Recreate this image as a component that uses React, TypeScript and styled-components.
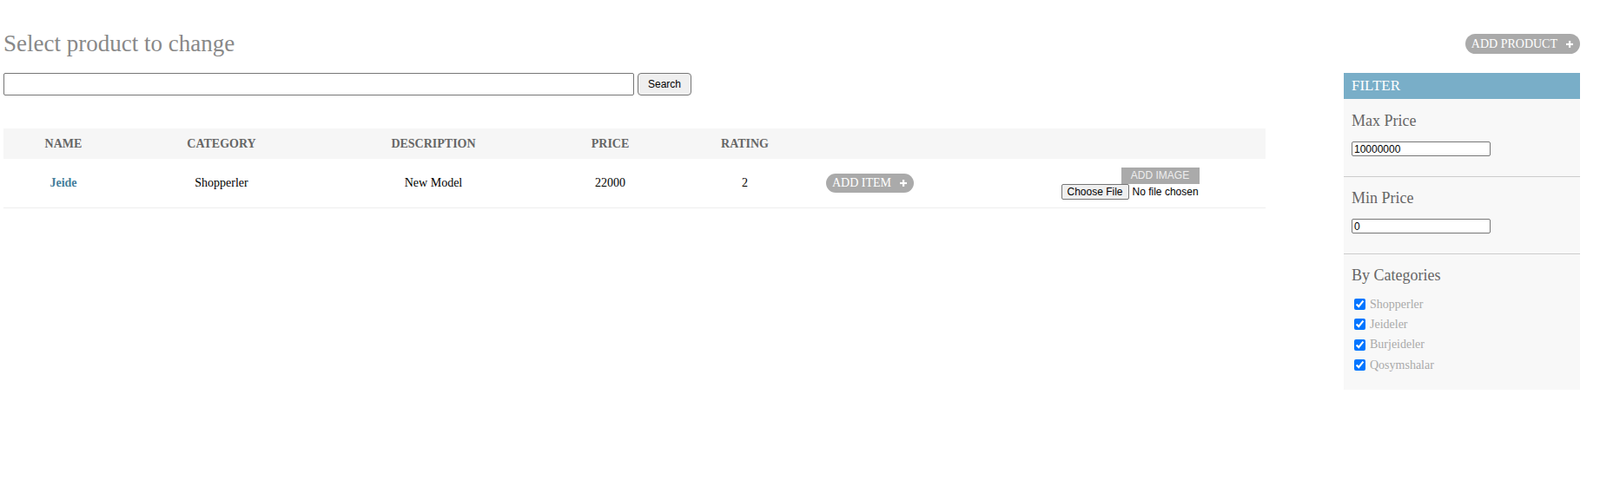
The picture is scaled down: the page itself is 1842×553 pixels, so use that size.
import React from "react";
import styled, { createGlobalStyle } from "styled-components";

const GlobalStyle = createGlobalStyle`
  html, body {
    margin: 0;
    padding: 0;
    background: #ffffff;
  }
  body {
    font-family: "Liberation Serif", "Times New Roman", serif;
  }
`;

const Page = styled.div`
  padding: 35px 23px 0 4px;
`;

const TopBar = styled.div`
  display: flex;
  align-items: center;
  justify-content: space-between;
`;

const Title = styled.h1`
  margin: 0;
  font-size: 27px;
  line-height: 31px;
  font-weight: 400;
  color: #888888;
`;

const Pill = styled.a<{ $h: number }>`
  display: inline-flex;
  align-items: center;
  gap: 10px;
  height: ${(p) => p.$h}px;
  padding: 0 8px 0 7px;
  border-radius: 12px;
  background: #aaaaaa;
  color: #ffffff;
  font-size: 14px;
  line-height: 16px;
  text-transform: uppercase;
  text-decoration: none;
  cursor: pointer;
  box-sizing: border-box;
`;

const PlusIcon = () => (
  <svg width="8" height="8" viewBox="0 0 8 8" aria-hidden="true">
    <rect x="3" y="0" width="2.2" height="8" fill="#fff" />
    <rect x="0" y="2.9" width="8" height="2.2" fill="#fff" />
  </svg>
);

const Content = styled.div`
  display: flex;
  justify-content: space-between;
  align-items: flex-start;
  margin-top: 18px;
`;

const Main = styled.div`
  width: 1453px;
`;

const SearchRow = styled.form`
  display: flex;
  align-items: center;
  gap: 4px;
`;

const SearchInput = styled.input`
  width: 726px;
  height: 26px;
  box-sizing: border-box;
  border: 1px solid #767676;
  border-radius: 2px;
  padding: 1px 3px;
  font-family: "Liberation Sans", Arial, sans-serif;
  font-size: 12px;
  background: #fff;
`;

const SearchButton = styled.button`
  width: 62px;
  height: 26px;
  box-sizing: border-box;
  border: 1px solid #767676;
  border-radius: 4px;
  background: #efefef;
  color: #000;
  font-family: "Liberation Sans", Arial, sans-serif;
  font-size: 12px;
  padding: 0;
  cursor: pointer;
`;

const Table = styled.table`
  margin-top: 38px;
  width: 1453px;
  border-collapse: collapse;
  table-layout: fixed;
`;

const Col = styled.col<{ $w: number }>`
  width: ${(p) => p.$w}px;
`;

const Th = styled.th`
  height: 35px;
  padding: 0;
  background: #f6f6f6;
  font-size: 14px;
  font-weight: 700;
  color: #666666;
  text-transform: uppercase;
  text-align: center;
  vertical-align: middle;
`;

const Td = styled.td<{ $align?: string; $pl?: number }>`
  height: 56px;
  padding: 0 0 0 ${(p) => p.$pl ?? 0}px;
  border-bottom: 1px solid #eeeeee;
  font-size: 14px;
  color: #000000;
  text-align: ${(p) => p.$align ?? "center"};
  vertical-align: middle;
`;

const NameLink = styled.a`
  color: #447e9b;
  font-weight: 700;
  text-decoration: none;
`;

const UploadForm = styled.form`
  display: flex;
  flex-direction: column;
  align-items: center;
`;

const UploadButton = styled.button`
  width: 90px;
  height: 19px;
  border: none;
  padding: 0;
  background: #aaaaaa;
  color: #eeeeee;
  font-family: "Liberation Sans", Arial, sans-serif;
  font-size: 12px;
  cursor: pointer;
`;

const FileInput = styled.input`
  width: 228px;
  font-family: "Liberation Sans", Arial, sans-serif;
  font-size: 12px;
  color: #000;
  &::file-selector-button {
    font-family: "Liberation Sans", Arial, sans-serif;
    font-size: 12px;
    height: 18px;
    padding: 0 6px;
    margin-right: 4px;
    border: 1px solid #767676;
    border-radius: 2px;
    background: #efefef;
    color: #000;
  }
`;

const Sidebar = styled.aside`
  width: 272px;
  background: #f8f8f8;
`;

const FilterTitle = styled.h2`
  margin: 0;
  padding: 5px 9px 6px;
  background: #79aec8;
  color: #ffffff;
  font-size: 17px;
  line-height: 19px;
  font-weight: 400;
`;

const Section = styled.div<{ $last?: boolean }>`
  padding: ${(p) => (p.$last ? "14px 9px 17px" : "14px 9px 23px")};
  border-bottom: ${(p) => (p.$last ? "none" : "1px solid #cccccc")};
  &:first-of-type {
    padding-top: 15px;
  }
`;

const SectionTitle = styled.h3`
  margin: 0 0 14px;
  font-size: 18px;
  line-height: 20px;
  font-weight: 400;
  color: #666666;
`;

const PriceInput = styled.input`
  display: block;
  width: 160px;
  height: 17px;
  box-sizing: border-box;
  margin: 0;
  padding: 0 2px;
  border: 1px solid #767676;
  border-radius: 2px;
  background: #fff;
  font-family: "Liberation Sans", Arial, sans-serif;
  font-size: 12px;
  color: #000;
`;

const CategoryList = styled.ul`
  list-style: none;
  margin: -2px 0 0;
  padding: 0;
`;

const CategoryItem = styled.li`
  display: flex;
  align-items: center;
  height: 23.33px;
  font-size: 14px;
  color: #aaaaaa;
`;

const CheckBox = styled.input`
  width: 13px;
  height: 13px;
  margin: 0 5px 0 3px;
  accent-color: #0075ff;
`;

const categories = ["Shopperler", "Jeideler", "Burjeideler", "Qosymshalar"];
const colWidths = [138, 226, 262, 145, 165, 274, 243];

export default function App() {
  return (
    <>
      <GlobalStyle />
      <Page>
        <TopBar>
          <Title>Select product to change</Title>
          <Pill $h={23}>
            ADD PRODUCT <PlusIcon />
          </Pill>
        </TopBar>
        <Content>
          <Main>
            <SearchRow onSubmit={(e) => e.preventDefault()}>
              <SearchInput type="text" />
              <SearchButton type="submit">Search</SearchButton>
            </SearchRow>
            <Table>
              <colgroup>
                {colWidths.map((w, i) => (
                  <Col key={i} $w={w} />
                ))}
              </colgroup>
              <thead>
                <tr>
                  <Th>Name</Th>
                  <Th>Category</Th>
                  <Th>Description</Th>
                  <Th>Price</Th>
                  <Th>Rating</Th>
                  <Th />
                  <Th />
                </tr>
              </thead>
              <tbody>
                <tr>
                  <Td>
                    <NameLink href="#">Jeide</NameLink>
                  </Td>
                  <Td>Shopperler</Td>
                  <Td>New Model</Td>
                  <Td>22000</Td>
                  <Td>2</Td>
                  <Td $align="left" $pl={11}>
                    <Pill $h={22}>
                      ADD ITEM <PlusIcon />
                    </Pill>
                  </Td>
                  <Td>
                    <UploadForm onSubmit={(e) => e.preventDefault()}>
                      <UploadButton type="submit">ADD IMAGE</UploadButton>
                      <FileInput type="file" />
                    </UploadForm>
                  </Td>
                </tr>
              </tbody>
            </Table>
          </Main>
          <Sidebar>
            <FilterTitle>FILTER</FilterTitle>
            <Section>
              <SectionTitle>Max Price</SectionTitle>
              <PriceInput type="text" defaultValue="10000000" />
            </Section>
            <Section>
              <SectionTitle>Min Price</SectionTitle>
              <PriceInput type="text" defaultValue="0" />
            </Section>
            <Section $last>
              <SectionTitle>By Categories</SectionTitle>
              <CategoryList>
                {categories.map((c) => (
                  <CategoryItem key={c}>
                    <CheckBox type="checkbox" defaultChecked />
                    {c}
                  </CategoryItem>
                ))}
              </CategoryList>
            </Section>
          </Sidebar>
        </Content>
      </Page>
    </>
  );
}
